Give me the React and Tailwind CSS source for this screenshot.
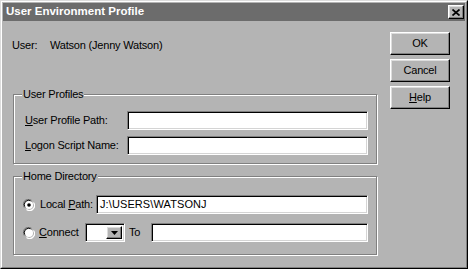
import React from 'react';

const raised =
  'border border-t-white border-l-white border-r-black border-b-black shadow-[inset_-1px_-1px_0_#808080,inset_1px_1px_0_#dcdcdc] bg-[#b4b4b4]';
const sunken =
  'border border-t-[#808080] border-l-[#808080] border-r-white border-b-white shadow-[inset_1px_1px_0_#000,inset_-1px_-1px_0_#d4d4d4] bg-white';
const etched =
  'relative border border-[#808080] shadow-[inset_1px_1px_0_#fff,1px_1px_0_#fff]';

const Radio = ({ checked }) => (
  <svg width="12" height="12" viewBox="0 0 12 12" className="shrink-0">
    <path d="M1.5 8.5A5 5 0 0 1 8.5 1.5" fill="none" stroke="#808080" strokeWidth="1.2" />
    <path d="M2.6 8.4A4 4 0 0 1 8.4 2.6" fill="none" stroke="#000" strokeWidth="1" />
    <circle cx="6" cy="6" r="4" fill="#fff" />
    <path d="M10.5 3.5A5 5 0 0 1 3.5 10.5" fill="none" stroke="#fff" strokeWidth="1.2" />
    {checked && <circle cx="6" cy="6" r="1.8" fill="#000" />}
  </svg>
);

const GroupBox = ({ title, className, children }) => (
  <div className={`${etched} ${className}`}>
    <span className="absolute -top-[7px] left-[8px] px-[1px] bg-[#b4b4b4] leading-[13px]">
      {title}
    </span>
    {children}
  </div>
);

const Button = ({ children }) => (
  <button className={`${raised} w-[60px] h-[23px] flex items-center justify-center leading-[13px]`}>
    {children}
  </button>
);

export default function App() {
  return (
    <div
      className="w-[468px] h-[269px] border border-t-[#dcdcdc] border-l-[#dcdcdc] border-r-black border-b-black bg-[#b4b4b4] text-black text-[11px] tracking-[-0.2px]"
      style={{ fontFamily: '"Liberation Sans", Arial, sans-serif' }}
    >
      <div className="h-full flex flex-col border border-t-white border-l-white border-r-[#808080] border-b-[#808080] p-[1px]">
        <div className="h-[18px] bg-[#6c6c6c] flex items-center pl-[3px] pr-[1px]">
          <span className="text-white font-bold text-[11.5px] tracking-normal leading-none">
            User Environment Profile
          </span>
          <div className={`${raised} ml-auto w-[16px] h-[14px] flex items-center justify-center`}>
            <svg width="8" height="7" viewBox="0 0 8 7">
              <path d="M0.5 0.5L7.5 6.5M7.5 0.5L0.5 6.5" stroke="#000" strokeWidth="1.7" />
            </svg>
          </div>
        </div>

        <div className="flex-1 flex pl-[10px]">
          <div className="w-[364px] flex flex-col pt-[18px]">
            <div className="flex leading-[13px] -ml-[1px]">
              <span className="w-[38px]">User:</span>
              <span>Watson (Jenny Watson)</span>
            </div>

            <GroupBox
              title="User Profiles"
              className="mt-[42px] h-[70px] flex flex-col gap-[6px] pt-[16px] pl-[11px] pr-[8px]"
            >
              <div className="flex items-center h-[19px]">
                <span className="w-[102px]">
                  <u>U</u>ser Profile Path:
                </span>
                <div className={`${sunken} flex-1 h-[19px]`} />
              </div>
              <div className="flex items-center h-[19px]">
                <span className="w-[102px]">
                  <u>L</u>ogon Script Name:
                </span>
                <div className={`${sunken} flex-1 h-[19px]`} />
              </div>
            </GroupBox>

            <GroupBox
              title="Home Directory"
              className="mt-[12px] h-[79px] flex flex-col gap-[9px] pt-[18px] pl-[9px] pr-[8px]"
            >
              <div className="flex items-center h-[19px]">
                <Radio checked />
                <span className="ml-[5px] w-[56px]">
                  Local <u>P</u>ath:
                </span>
                <div className={`${sunken} flex-1 h-[19px] flex items-center pl-[3px] tracking-[0.1px]`}>
                  J:\USERS\WATSONJ
                </div>
              </div>
              <div className="flex items-center h-[19px]">
                <Radio />
                <span className="ml-[4px] w-[46px]">
                  <u>C</u>onnect
                </span>
                <div className={`${sunken} w-[40px] h-[19px] flex p-[2px]`}>
                  <div className={`${raised} ml-auto w-[16px] h-full flex items-center justify-center`}>
                    <svg width="7" height="4" viewBox="0 0 7 4">
                      <path d="M0 0H7L3.5 4Z" fill="#000" />
                    </svg>
                  </div>
                </div>
                <span className="ml-[4px] w-[22px]">To</span>
                <div className={`${sunken} flex-1 h-[19px]`} />
              </div>
            </GroupBox>
          </div>

          <div className="ml-[13px] pt-[11px] flex flex-col gap-[4px]">
            <Button>OK</Button>
            <Button>Cancel</Button>
            <Button>
              <span>
                <u>H</u>elp
              </span>
            </Button>
          </div>
        </div>
      </div>
    </div>
  );
}
